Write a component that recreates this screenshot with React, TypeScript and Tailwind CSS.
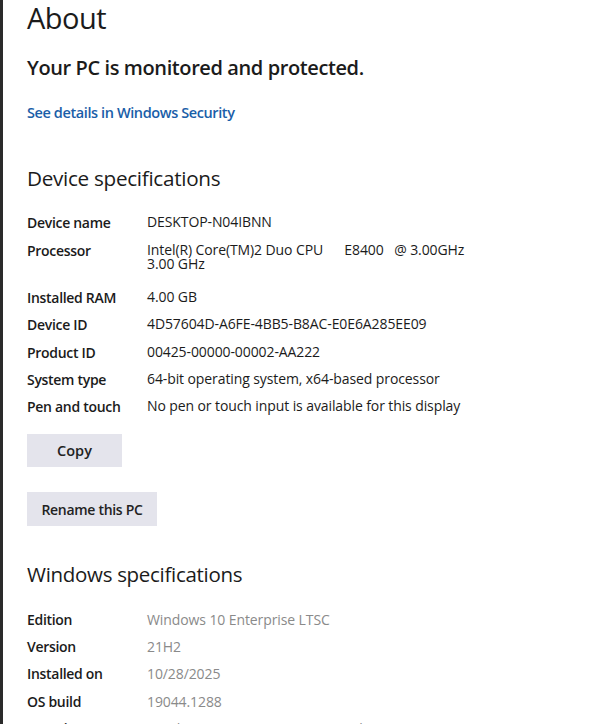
export default function App() {
  const device = [
    ["Device name", "DESKTOP-N04IBNN"],
    ["Processor", "Intel(R) Core(TM)2 Duo CPU      E8400   @ 3.00GHz\n3.00 GHz"],
    ["Installed RAM", "4.00 GB"],
    ["Device ID", "4D57604D-A6FE-4BB5-B8AC-E0E6A285EE09"],
    ["Product ID", "00425-00000-00002-AA222"],
    ["System type", "64-bit operating system, x64-based processor"],
    ["Pen and touch", "No pen or touch input is available for this display"],
  ];
  const windows = [
    ["Edition", "Windows 10 Enterprise LTSC"],
    ["Version", "21H2"],
    ["Installed on", "10/28/2025"],
    ["OS build", "19044.1288"],
    ["Experience", "Windows Feature Experience Pack 1000.19041.1000.0"],
  ];

  return (
    <div
      className="h-[724px] w-[599px] overflow-hidden bg-white border-l-[3px] border-[#2a2a2a] pl-[24px] text-[#1b1b1b]"
      style={{ fontFamily: '"Open Sans", "Noto Sans", sans-serif' }}
    >
      <h1 className="text-[29px] leading-[36px] tracking-[-0.5px]">About</h1>
      <div className="mt-[19px] text-[20px] leading-[26px] font-semibold tracking-[-0.4px]">
        Your PC is monitored and protected.
      </div>
      <div className="mt-[22px] text-[14.5px] leading-[20px] font-semibold text-[#1a5ea8] tracking-[-0.4px]">
        See details in Windows Security
      </div>

      <h2 className="mt-[41px] text-[20.7px] leading-[28px] tracking-[-0.3px]">Device specifications</h2>
      <div className="mt-[17px] flex flex-col">
        {device.map(([k, v]) => (
          <div
            key={k}
            className={`flex leading-[15px] py-[6.2px] ${k === "Processor" ? "pb-[13px]" : ""}`}
          >
            <div className="w-[120px] shrink-0 text-[14px] font-semibold tracking-[-0.3px]">{k}</div>
            <div className="whitespace-pre text-[14px] leading-[14px] tracking-[-0.1px]">{v}</div>
          </div>
        ))}
      </div>

      <button className="mt-[14px] block w-[95px] h-[33px] bg-[#e4e4ec] text-[14.5px] font-semibold text-[#222]">
        Copy
      </button>
      <button className="mt-[25px] block w-[130px] h-[34px] bg-[#e4e4ec] text-[14px] font-semibold text-[#222] tracking-[-0.3px]">
        Rename this PC
      </button>

      <h2 className="mt-[34px] text-[20.5px] leading-[28px] tracking-[-0.3px]">Windows specifications</h2>
      <div className="mt-[17px] flex flex-col">
        {windows.map(([k, v]) => (
          <div key={k} className="flex leading-[15px] py-[6.2px]">
            <div className="w-[120px] shrink-0 text-[14px] font-semibold tracking-[-0.3px]">{k}</div>
            <div className="text-[14px] text-[#8a8a8a] tracking-[-0.1px]">{v}</div>
          </div>
        ))}
      </div>
    </div>
  );
}
